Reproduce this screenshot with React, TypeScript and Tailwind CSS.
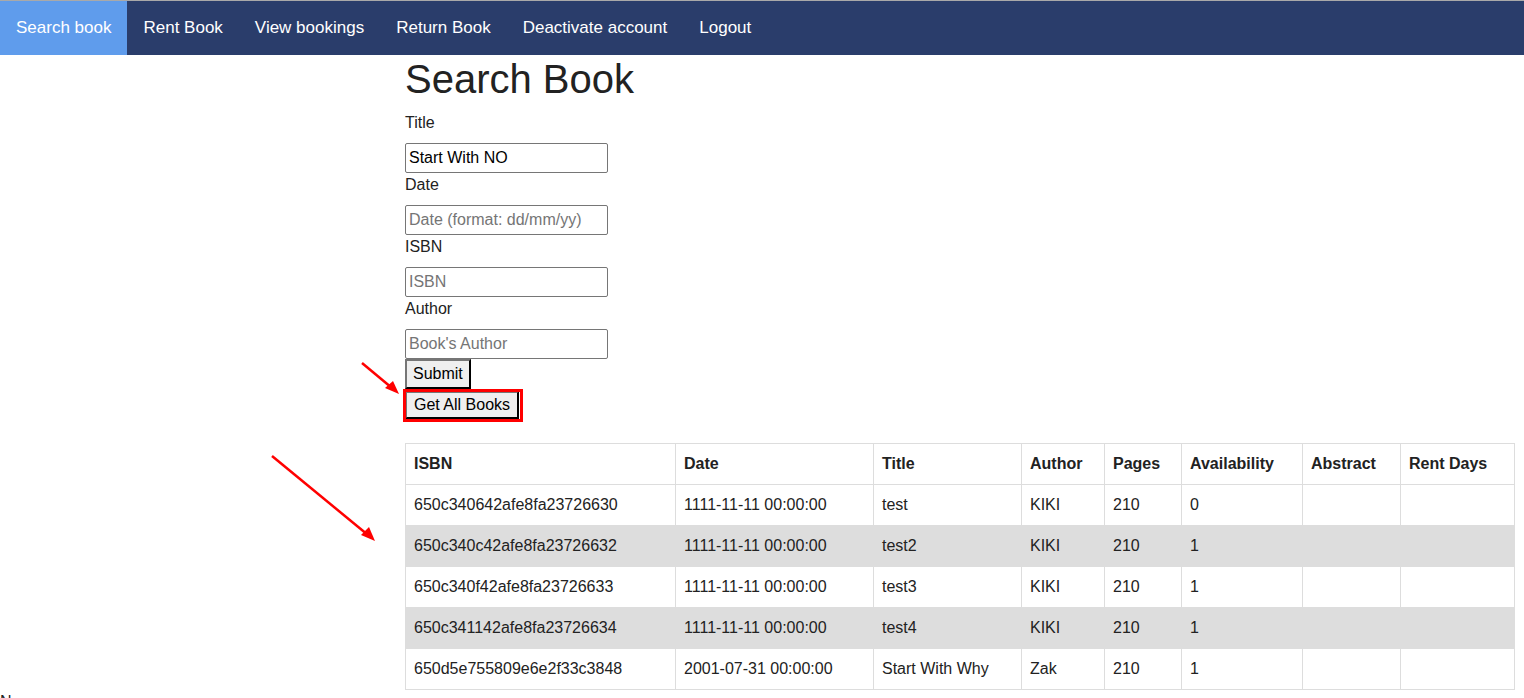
import React from "react";

type Book = {
  isbn: string;
  date: string;
  title: string;
  author: string;
  pages: string;
  availability: string;
};

const books: Book[] = [
  { isbn: "650c340642afe8fa23726630", date: "1111-11-11 00:00:00", title: "test", author: "KIKI", pages: "210", availability: "0" },
  { isbn: "650c340c42afe8fa23726632", date: "1111-11-11 00:00:00", title: "test2", author: "KIKI", pages: "210", availability: "1" },
  { isbn: "650c340f42afe8fa23726633", date: "1111-11-11 00:00:00", title: "test3", author: "KIKI", pages: "210", availability: "1" },
  { isbn: "650c341142afe8fa23726634", date: "1111-11-11 00:00:00", title: "test4", author: "KIKI", pages: "210", availability: "1" },
  { isbn: "650d5e755809e6e2f33c3848", date: "2001-07-31 00:00:00", title: "Start With Why", author: "Zak", pages: "210", availability: "1" },
];

const navItems = ["Search book", "Rent Book", "View bookings", "Return Book", "Deactivate account", "Logout"];

const cols = ["w-[270px]", "w-[198px]", "w-[148px]", "w-[83px]", "w-[77px]", "w-[121px]", "w-[98px]", "w-[114px]"];
const heads = ["ISBN", "Date", "Title", "Author", "Pages", "Availability", "Abstract", "Rent Days"];

function Field({ label, placeholder, value }: { label: string; placeholder: string; value?: string }) {
  return (
    <div>
      <div className="h-[22px] leading-[24px] mb-[10px]">{label}</div>
      <input
        type="text"
        defaultValue={value}
        placeholder={placeholder}
        className="block w-[203px] h-[30px] px-[3px] border border-[#767676] rounded-[2px] text-[16px] text-black placeholder:text-[#757575] outline-none"
      />
    </div>
  );
}

export default function App() {
  return (
    <div className="relative min-h-[698px] bg-white text-[#222] font-['Liberation_Sans',Arial,sans-serif] text-[16px]">
      {/* nav */}
      <div className="border-t border-[#a9a9a9] bg-[#2a3d6b] flex h-[55px]">
        {navItems.map((item, i) => (
          <div
            key={item}
            className={
              "px-4 h-full flex items-center text-[17px] text-white " + (i === 0 ? "bg-[#5f9cec]" : "")
            }
          >
            {item}
          </div>
        ))}
      </div>

      <div className="flex">
        <div className="w-[405px] shrink-0" />
        <div className="w-[1110px]">
          <h1 className="text-[40px] leading-[46px] mt-[1px] mb-[9px]">Search Book</h1>
          <Field label="Title" placeholder="Book's Title" value="Start With NO" />
          <Field label="Date" placeholder="Date (format: dd/mm/yy)" />
          <Field label="ISBN" placeholder="ISBN" />
          <Field label="Author" placeholder="Book's Author" />
          <button className="block h-[30px] px-[6px] bg-[#efefef] text-black border-2 border-t-[#767676] border-l-[#767676] border-r-black border-b-black">
            Submit
          </button>
          <div className="relative w-fit mt-[2px]">
            <button className="block h-[28px] px-[7px] bg-[#efefef] text-black border-2 border-t-[#767676] border-l-[#767676] border-r-black border-b-black whitespace-nowrap leading-[22px]">
              Get All Books
            </button>
            {/* red highlight box */}
            <span className="absolute -left-[2px] -top-[2px] -right-[4px] -bottom-[3px] border-[3px] border-[#ff0000]" />
          </div>

          <table className="mt-[24px] border-collapse border border-[#dddddd] w-[1109px] table-fixed">
            <thead>
              <tr className="h-[41px]">
                {heads.map((h, i) => (
                  <th key={h} className={cols[i] + " text-left font-bold pl-[8px] border border-[#dddddd]"}>
                    {h}
                  </th>
                ))}
              </tr>
            </thead>
            <tbody>
              {books.map((b, i) => (
                <tr key={b.isbn} className={"h-[41px] " + (i % 2 === 1 ? "bg-[#dddddd]" : "bg-white")}>
                  {[b.isbn, b.date, b.title, b.author, b.pages, b.availability, "", ""].map((c, j) => (
                    <td key={j} className="pl-[8px] border-x border-[#dddddd] border-b">
                      {c}
                    </td>
                  ))}
                </tr>
              ))}
            </tbody>
          </table>
        </div>
      </div>
      <div className="mt-[3px] leading-[18px]">N</div>

      {/* annotation arrows */}
      <svg className="absolute left-0 top-0 pointer-events-none" width="1524" height="698">
        <line x1="362" y1="363" x2="392" y2="388" stroke="#ff0000" strokeWidth="2.5" />
        <polygon points="399,394 385,388 393,381" fill="#ff0000" />
        <line x1="272" y1="456" x2="368" y2="535" stroke="#ff0000" strokeWidth="2.5" />
        <polygon points="375,541 361,535 369,527" fill="#ff0000" />
      </svg>
    </div>
  );
}
